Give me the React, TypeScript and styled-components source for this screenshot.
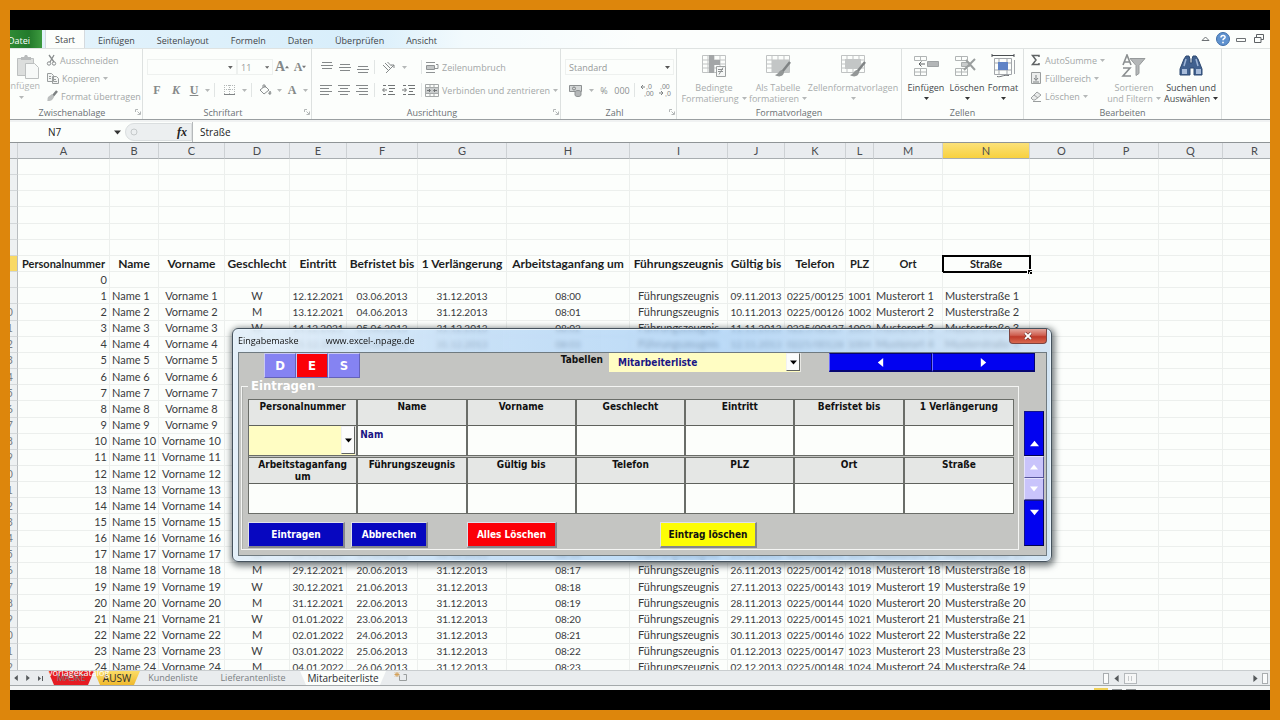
import React from "react";
import styled, { createGlobalStyle, css } from "styled-components";

const ui = `"Open Sans", "Noto Sans", sans-serif`;
const cellFont = `Lato, "Open Sans", sans-serif`;
const formFont = `"DejaVu Sans Condensed", "DejaVu Sans", sans-serif`;

const Global = createGlobalStyle`
  * { box-sizing: border-box; }
  body { margin: 0; font-family: ${ui}; font-size: 9px; color: #3c3f42; }
  button, input, select { font: inherit; color: inherit; margin: 0; padding: 0; border: 0; background: none; }
`;

const Stage = styled.div`
  height: 100vh;
  min-height: 640px;
  border: 10px solid #dd860c;
  background: #000;
  padding: 20px 0;
  overflow: hidden;
`;

const Workbook = styled.main`
  position: relative;
  height: 100%;
  display: flex;
  flex-direction: column;
  background: #fcfefc;
  overflow: hidden;
`;

/* ---------- ribbon tabs ---------- */

const TabBar = styled.nav`
  display: flex;
  flex: 0 0 18px;
  align-items: stretch;
  border-bottom: 1px solid #dfe3e2;
  background: linear-gradient(90deg, #e4f3fb 0, #d8eefb 28%, #f2fafd 36%, #fcfefd 50%, #fcfefc 100%);
`;

const RibbonTab = styled.button<{ $active?: boolean }>`
  padding: 2px 11px 0;
  line-height: 15px;
  white-space: nowrap;
  color: #3f4448;
  ${(p) =>
    p.$active &&
    css`
      height: 18px;
      background: #fcfefc;
      border: 1px solid #d5dade;
      border-width: 0 1px;
      padding: 1px 9px 0;
      margin-right: 2px;
    `}
`;

const FileTab = styled.button`
  display: flex;
  justify-content: flex-end;
  align-items: center;
  width: 32px;
  margin-right: 3px;
  padding: 2px 12px 0 0;
  line-height: 15px;
  overflow: hidden;
  color: #fff;
  background: linear-gradient(90deg, #2f8a34, #237a2b 60%, #3d9a3f);
`;

const WindowTools = styled.div`
  display: flex;
  align-items: center;
  gap: 4px;
  margin-left: auto;
  padding-right: 4px;
`;

const ToolButton = styled.button`
  display: flex;
  align-items: center;
  justify-content: center;
  width: 14px;
`;

/* ---------- ribbon ---------- */

const Ribbon = styled.section`
  display: flex;
  flex: 0 0 71px;
  border-bottom: 1px solid #9a9fa1;
  background: #fcfefc;
`;

const Group = styled.div<{ $w: number }>`
  display: flex;
  flex-direction: column;
  flex: 0 0 ${(p) => p.$w}px;
  border-right: 1px solid #dde1e0;
`;

const GroupBody = styled.div`
  display: flex;
  flex: 1;
`;

const GroupFoot = styled.div`
  display: flex;
  justify-content: center;
  align-items: center;
  height: 14px;
  color: #6b7074;
`;

const FootLabel = styled.span`
  flex: 1;
  text-align: center;
`;

const Rows = styled.div<{ $pad?: number }>`
  display: flex;
  flex-direction: column;
  padding: 8px 0 0 ${(p) => p.$pad ?? 8}px;
  gap: 3px;
`;

const Row = styled.div`
  display: flex;
  align-items: center;
  height: 20px;
`;

const SmallList = styled.div<{ $pad: number }>`
  display: flex;
  flex-direction: column;
  padding: 2px 0 0 ${(p) => p.$pad}px;
`;

const SmallButton = styled.button`
  display: flex;
  align-items: center;
  gap: 3px;
  height: 18px;
  white-space: nowrap;
  color: #a3a7a7;
`;

const IconButton = styled.button<{ $w?: number }>`
  display: flex;
  align-items: center;
  justify-content: center;
  flex: 0 0 ${(p) => p.$w ?? 18}px;
  height: 18px;
  color: #8c9091;
`;

const Glyph = styled.span<{ $style?: "b" | "i" | "u"; $big?: boolean }>`
  font-family: "Liberation Serif", serif;
  font-weight: bold;
  font-size: ${(p) => (p.$big ? 14 : 12)}px;
  line-height: 16px;
  font-style: ${(p) => (p.$style === "i" ? "italic" : "normal")};
  text-decoration: ${(p) => (p.$style === "u" ? "underline" : "none")};
  color: #858989;
`;

const Rule = styled.span`
  width: 1px;
  height: 14px;
  margin: 0 3px;
  background: #e1e5e4;
`;

const BoxField = styled.label<{ $w: number }>`
  display: flex;
  align-items: center;
  justify-content: space-between;
  width: ${(p) => p.$w}px;
  height: 16px;
  padding: 0 3px;
  border: 1px solid #eef1ef;
  color: #96999a;
`;

const BoxInput = styled.input`
  width: 100%;
  min-width: 0;
  outline: none;
`;

const BoxSelect = styled.select`
  flex: 1;
  appearance: none;
  outline: none;
`;

const BigButton = styled.button<{ $w: number; $off?: boolean }>`
  display: flex;
  flex-direction: column;
  align-items: center;
  width: ${(p) => p.$w}px;
  padding-top: 5px;
  line-height: 11px;
  color: ${(p) => (p.$off ? "#a8acac" : "#44484b")};
  white-space: nowrap;
  > svg:first-child { margin-bottom: 4px; }
  > svg:last-child { margin-top: 3px; }
`;

const ArrowLabel = styled.span`
  display: flex;
  align-items: center;
  gap: 3px;
`;

const PasteButton = styled.button`
  display: flex;
  flex-direction: column;
  align-items: flex-end;
  width: 30px;
  padding-top: 5px;
  line-height: 11px;
  overflow: hidden;
  color: #b0b3b3;
`;

const PasteArrow = styled.span`
  padding-right: 16px;
`;

/* ---------- formula bar ---------- */

const FormulaBar = styled.div`
  display: flex;
  flex: 0 0 23px;
  border-top: 2px solid #f0f2f2;
  border-bottom: 1px solid #8f9496;
  font-size: 10px;
  color: #222;
`;

const NameBox = styled.label`
  display: flex;
  align-items: center;
  width: 113px;
  padding-right: 2px;
`;

const NameInput = styled.input`
  width: 88px;
  flex: 1;
  text-align: center;
  padding-right: 15px;
`;

const FxPill = styled.div`
  display: flex;
  align-items: center;
  justify-content: space-between;
  width: 67px;
  margin: 1px 0 1px 2px;
  padding: 0 4px 0 4px;
  border-radius: 9px 0 0 9px;
  border: 1px solid #dadedf;
  background: #eceff0;
`;

const FxButton = styled.button`
  font-family: "Liberation Serif", serif;
  font-style: italic;
  font-weight: bold;
  font-size: 12px;
  line-height: 14px;
`;

const FormulaInput = styled.input`
  flex: 1;
  padding-left: 7px;
  border-left: 1px solid #b5b9bb;
  outline: none;
`;

/* ---------- sheet ---------- */

const SheetArea = styled.section`
  flex: 1;
  min-height: 0;
  overflow: hidden;
`;

const Grid = styled.table`
  table-layout: fixed;
  width: max(100%, 1277px);
  height: 533px;
  border-collapse: separate;
  border-spacing: 0;
  font-family: ${cellFont};
  font-size: 11px;
  line-height: 14px;
  color: #3a3b3c;
`;

const ColHead = styled.th<{ $on?: boolean }>`
  height: 16px;
  padding: 0;
  font-weight: normal;
  text-align: center;
  color: #4a4d50;
  border-right: 1px solid #cdd1d4;
  border-bottom: 1px solid #a8adb0;
  background: ${(p) => (p.$on ? "linear-gradient(#fbe179, #f8d13f)" : "#e9ecef")};
`;

const RowHead = styled.th<{ $on?: boolean }>`
  padding: 0;
  font-weight: normal;
  color: #7b7f82;
  border-right: 1px solid #b9bdc0;
  border-bottom: 1px solid #d3d7d9;
  background: ${(p) => (p.$on ? "#f9d965" : "#eef1f2")};
`;

const RowNumber = styled.div`
  display: flex;
  justify-content: flex-end;
  padding-right: 4px;
  height: 14px;
  overflow: hidden;
`;

const Cell = styled.td<{ $align?: string; $num?: boolean; $active?: boolean }>`
  position: relative;
  height: 16px;
  padding: 0 2px;
  text-align: ${(p) => p.$align ?? "center"};
  white-space: nowrap;
  font-size: ${(p) => (p.$num ? 10 : 11)}px;
  border-right: 1px solid #ecefed;
  border-bottom: 1px solid #ecefed;
  ${(p) =>
    p.$active &&
    css`
      outline: 2px solid #000;
      outline-offset: -1px;
    `}
`;

const HeadCell = styled(Cell)<{ $strong?: boolean }>`
  padding: 0;
  font-weight: 700;
  color: #1d1e1f;
  font-size: ${(p) => (p.$strong ? 12 : 11)}px;
`;

const FillHandle = styled.span`
  position: absolute;
  right: -3px;
  bottom: -3px;
  width: 5px;
  height: 5px;
  background: #000;
  border: 1px solid #fff;
  border-width: 1px 0 0 1px;
`;

/* ---------- sheet tabs ---------- */

const SheetBar = styled.div`
  position: relative;
  display: flex;
  align-items: stretch;
  flex: 0 0 14px;
  border-top: 1px solid #c9cdcf;
  border-bottom: 1px solid #a4a9ab;
  background: #e9ecee;
  line-height: 12px;
`;

const SheetNav = styled.div`
  display: flex;
  align-items: center;
  justify-content: space-between;
  width: 34px;
  padding-left: 3px;
  margin-right: 4px;
`;

const SheetTab = styled.button<{ $bg?: string; $w: number; $active?: boolean }>`
  width: ${(p) => p.$w}px;
  white-space: nowrap;
  font-size: ${(p) => (p.$active ? 10 : 9)}px;
  color: ${(p) => (p.$active ? "#2b2d2f" : "#7a7f83")};
  background: ${(p) => p.$bg ?? "transparent"};
  clip-path: polygon(0 0, 100% 0, calc(100% - 6px) 100%, 6px 100%);
`;

const Watermark = styled.span`
  position: absolute;
  left: 38px;
  top: -4px;
  color: #fff;
`;

const HScroll = styled.div`
  display: flex;
  align-items: center;
  margin-left: auto;
  width: 167px;
  padding-right: 2px;
`;

const Splitter = styled.span`
  width: 6px;
  height: 11px;
  border: 1px solid #a9adb0;
  background: #fafbfb;
`;

const Thumb = styled.span`
  width: 13px;
  height: 11px;
  margin: 0 auto 0 1px;
  border: 1px solid #b5b9bc;
  background: repeating-linear-gradient(90deg, #c6c9cb 0 1px, #f6f7f7 1px 3px) center / 5px 5px no-repeat #f6f7f7;
`;

const StatusBar = styled.footer`
  display: flex;
  flex: 0 0 4px;
  align-items: flex-end;
  justify-content: flex-end;
  gap: 4px;
  padding-right: 134px;
  background: #f3f5f5;
`;

const ViewMark = styled.span<{ $on?: boolean }>`
  width: ${(p) => (p.$on ? 14 : 10)}px;
  height: ${(p) => (p.$on ? 2 : 1)}px;
  background: ${(p) => (p.$on ? "#efcf55" : "#8b8f91")};
`;

/* ---------- entry form window ---------- */

const Dialog = styled.section`
  position: absolute;
  left: 222px;
  top: 298px;
  width: 820px;
  height: 234px;
  display: flex;
  flex-direction: column;
  padding: 0 4px 5px 5px;
  border: 1px solid #46535e;
  border-radius: 6px;
  background: linear-gradient(90deg, rgba(224, 237, 248, 0.85), rgba(180, 213, 245, 0.72) 30%, rgba(160, 203, 245, 0.7) 60%, rgba(198, 221, 242, 0.75));
  backdrop-filter: blur(2px);
  box-shadow: inset 0 0 0 1px #e9f4fc, 1px 2px 6px 2px rgba(30, 40, 45, 0.6);
  font-family: ${formFont};
  font-size: 10px;
  font-weight: bold;
  color: #111;
`;

const TitleBar = styled.header`
  display: flex;
  flex: 0 0 23px;
  align-items: flex-start;
  gap: 27px;
  font-family: ${ui};
  font-weight: normal;
  font-size: 9px;
  line-height: 23px;
`;

const CloseButton = styled.button`
  display: flex;
  align-items: center;
  justify-content: center;
  width: 38px;
  height: 15px;
  margin-left: auto;
  border: 1px solid #7d4440;
  border-top: 0;
  border-radius: 0 0 4px 4px;
  background: linear-gradient(#e3a59b, #cf5f50 45%, #bf3a2a 55%, #d9694f);
`;

const Client = styled.div`
  flex: 1;
  display: flex;
  flex-direction: column;
  border: 1px solid #6f7a80;
  background: #c4c5c2;
`;

const TopRow = styled.div`
  display: flex;
  align-items: flex-start;
  height: 25px;
`;

const ModeButtons = styled.div`
  display: flex;
  margin-left: 25px;
`;

const ModeButton = styled.button<{ $on?: boolean }>`
  width: 32px;
  height: 25px;
  font-weight: bold;
  font-size: 13px;
  color: #fff;
  background: ${(p) => (p.$on ? "#fb0007" : "#8583f2")};
  border: 1px solid #c9c9f4;
  border-right-color: #6462b8;
  border-bottom-color: #6462b8;
`;

const TableLabel = styled.label`
  margin-left: auto;
  margin-right: 6px;
  line-height: 14px;
`;

const Combo = styled.span<{ $w?: number }>`
  display: flex;
  align-items: stretch;
  width: ${(p) => (p.$w ? `${p.$w}px` : "auto")};
  height: 19px;
  padding-bottom: 1px;
  border-right: 1px solid #e8e8e4;
  background: #fffdc3;
`;

const FormSelect = styled.select`
  flex: 1;
  min-width: 0;
  appearance: none;
  outline: none;
  font-weight: bold;
  color: #1a1585;
  padding-left: 9px;
`;

const Drop = styled.span`
  display: flex;
  align-items: center;
  justify-content: center;
  width: 14px;
  background: #fcfdfc;
  border: 1px solid #f2f2f2;
  border-right-color: #60635f;
  border-bottom-color: #60635f;
`;

const Pager = styled.div`
  display: flex;
  margin: 0 11px 0 28px;
`;

const PageButton = styled.button`
  display: flex;
  align-items: center;
  justify-content: center;
  width: 103px;
  height: 19px;
  background: #0202f0;
  border: 1px solid #050570;
  border-left-color: #6d6dff;
  border-bottom-width: 2px;
`;

const Main = styled.div`
  flex: 1;
  display: flex;
  align-items: flex-start;
`;

const FieldBox = styled.fieldset`
  width: 778px;
  height: 172px;
  margin: 0 0 0 2px;
  min-width: 0;
  padding: 0 4px 0 6px;
  border: 1px solid #f4f5f3;
  box-shadow: inset 1px 0 0 #aeb0ad;
`;

const Legend = styled.legend`
  padding: 0 3px;
  font-size: 13px;
  line-height: 16px;
  color: #fff;
`;

const FieldGrid = styled.div`
  display: grid;
  grid-template-columns: repeat(7, 1fr);
  row-gap: 1px;
  margin-top: 5px;
  border-left: 1px solid #6a6d68;
`;

const Field = styled.div`
  display: flex;
  flex-direction: column;
  border: 1px solid #6a6d68;
  border-width: 1px 2px 1px 0;
  &:nth-child(7n) { border-right-width: 1px; }
`;

const FieldLabel = styled.label`
  height: 26px;
  padding: 1px 4px 0;
  line-height: 12px;
  text-align: center;
  background: #e5e7e5;
  border-bottom: 1px solid #5f625d;
`;

const FieldInput = styled.input`
  width: 100%;
  height: 29px;
  padding: 0 2px 12px;
  outline: none;
  font-weight: bold;
  color: #1a1585;
  background: #fcfefb;
`;

const NumberCombo = styled(Combo)`
  height: 29px;
`;

const Actions = styled.div`
  display: flex;
  margin-top: 8px;
`;

const ActionButton = styled.button<{ $w: number; $bg: string; $fg?: string; $gap?: number }>`
  width: ${(p) => p.$w}px;
  height: 26px;
  margin-right: ${(p) => p.$gap ?? 0}px;
  font-weight: bold;
  color: ${(p) => p.$fg ?? "#fff"};
  background: ${(p) => p.$bg};
  border: 2px solid #dfe0ea;
  border-right-color: #85868c;
  border-bottom-color: #85868c;
  border-width: 1px 2px 2px 1px;
`;

const SideBar = styled.div`
  display: flex;
  flex-direction: column;
  width: 20px;
  margin: 33px 0 0 5px;
`;

const SideButton = styled.button<{ $h: number; $pale?: boolean; $end?: boolean }>`
  display: flex;
  justify-content: center;
  align-items: ${(p) => (p.$pale ? "center" : p.$end ? "flex-end" : "flex-start")};
  height: ${(p) => p.$h}px;
  padding: 7px 0;
  background: ${(p) => (p.$pale ? "#c9c4fb" : "#0202f0")};
  border: 1px solid ${(p) => (p.$pale ? "#e5e3fd" : "#12128c")};
  border-right-color: ${(p) => (p.$pale ? "#55549a" : "#03034e")};
  border-bottom-color: ${(p) => (p.$pale ? "#55549a" : "#03034e")};
`;

/* ---------- drawings ---------- */

type Dir = "up" | "down" | "left" | "right";
const triangles: Record<Dir, string> = {
  up: "0,8 5,2 10,8",
  down: "0,2 5,8 10,2",
  left: "8,0 2,5 8,10",
  right: "2,0 8,5 2,10",
};
const Tri = ({ dir = "down", size = 6, color = "#333" }: { dir?: Dir; size?: number; color?: string }) => (
  <svg width={size} height={size} viewBox="0 0 10 10" aria-hidden="true">
    <polygon points={triangles[dir]} fill={color} />
  </svg>
);

const Svg = ({ w, h = w, children }: { w: number; h?: number; children: React.ReactNode }) => (
  <svg width={w} height={h} viewBox={`0 0 ${w} ${h}`} fill="none" stroke="#9a9e9e" aria-hidden="true">
    {children}
  </svg>
);

const Launcher = () => (
  <Svg w={8}>
    <path d="M1.5 4V1.5H4M3.500 3.500L6 6M6.500 3.500v3h-3" stroke="#b3b7b7" />
  </Svg>
);

const Lines = ({ rows }: { rows: [number, number, number][] }) => (
  <Svg w={13} h={13}>
    {rows.map(([x1, x2, y]) => (
      <path key={y} d={`M${x1} ${y + 0.5}H${x2}`} stroke="#85898a" />
    ))}
  </Svg>
);

const Indent = ({ flip }: { flip?: boolean }) => (
  <Svg w={13} h={12}>
    <path d="M1 1.500h3M6 1.500h7M7 4.500h6M7 7.500h4M1 10.500h3M6 10.500h7" stroke="#707475" />
    <path d={flip ? "M0 6h4M2.500 4L4.500 6L2.500 8" : "M1 6h4M2.500 4L.5 6L2.500 8"} stroke="#707475" />
  </Svg>
);

const TableIcon = ({ kind }: { kind: "cond" | "table" | "style" }) => (
  <Svg w={26} h={24}>
    <path d="M1.500 1.500h23v17h-23zM1.500 6h23M1.500 10h23M1.500 14h23M7 1.500v17M13 1.500v17M19 1.500v17" stroke="#c0c3c3" />
    {kind === "cond" && (
      <>
        <path d="M8 1h5v18H8zM13 6h6v5h-6z" fill="#a3a6a7" stroke="none" />
        <path d="M15.500 12.500h9v10h-9z" fill="#f6f8f7" stroke="#9da1a1" />
        <path d="M17 15.500h5M17 17.500h5M18 20.500l4-7" stroke="#8d9191" />
      </>
    )}
    {kind !== "cond" && (
      <>
        <path d={kind === "table" ? "M7 6h17v12H7z" : "M5 5h16v10H5z"} fill="#c3c6c6" stroke="none" />
        <path d="M25 8L17 18" stroke="#7f8384" strokeWidth="2.500" />
        <path d="M17 16c-3 0-3 4-7 5c4 3 9 1 9-3z" fill="#939797" stroke="none" />
      </>
    )}
  </Svg>
);

const CellsIcon = ({ kind }: { kind: "add" | "del" }) => (
  <Svg w={26} h={24}>
    <path d="M1.500 2.500h12v4h-12zM7.500 2.500v4M1.500 14.500h12v7h-12zM1.500 18h12M7.500 14.500v7" stroke="#b1b5b5" />
    {kind === "add" ? (
      <>
        <path d="M14.500 7.500h11v5h-11z" fill="#b3b6b7" stroke="#9fa3a4" />
        <path d="M12 10H6M8.500 7.500L6 10l2.500 2.500" stroke="#5d6162" />
      </>
    ) : (
      <>
        <path d="M7.500 8.500h8v4h-8z" fill="#c9cccc" stroke="#a9adad" />
        <path d="M12 6l9 10M21 5L10 16" stroke="#9a9e9e" strokeWidth="2" />
      </>
    )}
  </Svg>
);

const FormatIcon = () => (
  <Svg w={26} h={24}>
    <path d="M2 1.500h22M2 0v3M24 0v3" stroke="#4b4f52" />
    <path d="M4.500 4.500h17v16h-17zM4.500 9h17M4.500 16h17M9 4.500v16M17 4.500v16M24.500 6v14" stroke="#a3a7ab" />
    <path d="M8 8h10v8H8z" fill="#5f83c6" stroke="none" />
    <path d="M7 22.500c4 1 6-2 12-1" stroke="#6b6f73" />
  </Svg>
);

const SortIcon = () => (
  <Svg w={26} h={24}>
    <path d="M2 11L6 1l4 10M3.500 8h5M2 14h7L2 22h8" stroke="#8b8f90" strokeWidth="1.600" />
    <path d="M9 4.500h15l-6 7v8l-3 2v-10z" fill="#b4b7b8" stroke="#969a9b" />
  </Svg>
);

const Binoculars = () => (
  <Svg w={26} h={24}>
    <path d="M6 5l2-3h3l1 3v4h2V5l1-3h3l2 3l4 10v6h-8v-7h-4v7H2v-6z" fill="#41618f" stroke="#2f4a72" />
    <path d="M4 15h5v5H4zM18 15h5v5h-5z" fill="#a9bddb" stroke="none" />
    <path d="M8 5l-2 7M18 5l2 7" stroke="#9db4d6" strokeWidth="1.500" />
  </Svg>
);

const PasteIcon = () => (
  <Svg w={24} h={26}>
    <path d="M1.500 4.500h16v17h-16z" fill="#dcdedd" stroke="#bdc0c0" />
    <path d="M5 6V3h3l1-2h2l1 2h3v3z" fill="#b9bcbc" stroke="none" />
    <path d="M9.500 9.500h9l4 4v11h-13z" fill="#f7f9f8" stroke="#bdc0c0" />
  </Svg>
);

const Scissors = () => (
  <Svg w={11} h={12}>
    <path d="M3 1l5 7M8 1L4 8" stroke="#898d8e" strokeWidth="1.300" />
    <circle cx="3" cy="9.500" r="1.700" stroke="#898d8e" />
    <circle cx="8" cy="9.500" r="1.700" stroke="#898d8e" />
  </Svg>
);

const Copy = () => (
  <Svg w={13} h={12}>
    <path d="M1.500 1.500h4l2 2v6h-6zM6.500 4.500h4l2 2v5h-6zM3 4.500h2M3 6.500h2M8 7.500h2M8 9.500h3" fill="#f4f6f5" />
  </Svg>
);

const Brush = () => (
  <Svg w={12} h={12}>
    <path d="M11 1L6 7" stroke="#7d8182" strokeWidth="2.500" />
    <path d="M6 4L2 7c-1 2 0 4-1 4c3 0 6 0 7-5z" fill="#bcbfbf" stroke="none" />
  </Svg>
);

const WrapIcon = () => (
  <Svg w={14} h={13}>
    <path d="M1 1.500h9M1.500 4.500h8v4h-8zM1 11.500h9M11 3.500h2v4h-3" stroke="#8f9394" />
    <path d="M2 5h7v3H2z" fill="#c3c6c6" stroke="none" />
  </Svg>
);

const MergeIcon = () => (
  <Svg w={14} h={13}>
    <path d="M.5.5h13v12H.5zM.5 3.500h13M.5 9.500h13M5 .5v3M9 .5v3M5 9.500v3M9 9.500v3" stroke="#a5a9a9" />
    <path d="M1 4h12v5H1z" fill="#c9cccc" stroke="none" />
    <path d="M2 6.500h3M9 6.500h3M4 5l1.500 1.500L4 8M10 5L8.500 6.500L10 8" stroke="#707475" />
  </Svg>
);

const Orientation = () => (
  <Svg w={14} h={13}>
    <path d="M1 4l5 5M3 2l5 5M5.500 1l4 4M4 12l8-8M12 4h-3M12 4v3" stroke="#85898a" />
  </Svg>
);

const BordersIcon = () => (
  <Svg w={13} h={12}>
    <path d="M1.500 1v9M6.500 1v9M11.500 1v9M1 1.500h11M1 5.500h11" stroke="#b3b7b7" strokeDasharray="1 1" />
    <path d="M1 10.500h11" stroke="#808485" />
  </Svg>
);

const FillIcon = () => (
  <Svg w={14} h={13}>
    <path d="M2 6l5-4l4 4l-5 4zM5 4V1h2v3" stroke="#8b8f90" />
    <path d="M12 7c2 3 0 4-1 3c-1-1 1-2 1-3z" fill="#8b8f90" />
  </Svg>
);

const Currency = () => (
  <Svg w={14} h={13}>
    <path d="M.5 1.500h12v6H.5z" fill="#d4d7d7" stroke="#8d9192" />
    <circle cx="5" cy="4.500" r="1.500" stroke="#7f8384" />
    <path d="M6 8c0-2 6-2 6 0v3c0 2-6 2-6 0z" fill="#b4b7b8" stroke="#8d9192" />
  </Svg>
);

const Decimals = ({ more }: { more?: boolean }) => (
  <svg width="15" height="14" viewBox="0 0 15 14" fontFamily="Liberation Sans" fontSize="7" fill="#7f8384" aria-hidden="true">
    <text x={more ? 6 : 2} y="6">{more ? ",0" : ",00"}</text>
    <text x={more ? 4 : 7} y="13">{more ? ",00" : ",0"}</text>
    <path d={more ? "M1 4h4M1 4l2-2M1 4l2 2" : "M1 10h4M5 10l-2-2M5 10l-2 2"} stroke="#7f8384" fill="none" />
  </svg>
);

const FillDown = () => (
  <Svg w={12} h={12}>
    <path d="M1.500.5h9v11h-9z" fill="#eceeed" />
    <path d="M6 3v5M4 6l2 2.500L8 6M3 10h6" stroke="#7d8182" />
  </Svg>
);

const Eraser = () => (
  <Svg w={12} h={12}>
    <path d="M1 8l6-6l4 3l-6 5H3zM4 5l4 3" fill="#e9ebea" stroke="#9da1a1" />
    <path d="M3 11.500h8" />
  </Svg>
);

const Help = () => (
  <svg width="14" height="14" viewBox="0 0 14 14" aria-hidden="true">
    <circle cx="7" cy="7" r="6.500" fill="#5f92cf" stroke="#3f6ea8" />
    <path d="M5 5.500c0-3 4.500-2.500 4 0c-.3 1.200-2 1.300-2 2.700M7 9.700v1.500" fill="none" stroke="#fff" strokeWidth="1.600" />
  </svg>
);

/* ---------- data ---------- */

const columns: [string, number][] = [
  ["A", 92], ["B", 49], ["C", 66], ["D", 65], ["E", 57], ["F", 71], ["G", 89], ["H", 123], ["I", 98],
  ["J", 57], ["K", 61], ["L", 28], ["M", 69], ["N", 87], ["O", 64], ["P", 65], ["Q", 64], ["R", 64],
];

const headings = [
  "Personalnummer", "Name", "Vorname", "Geschlecht", "Eintritt", "Befristet bis", "1 Verlängerung",
  "Arbeitstaganfang um", "Führungszeugnis", "Gültig bis", "Telefon", "PLZ", "Ort", "Straße",
];

const two = (n: number) => String(n).padStart(2, "0");
const day = (y: number, m: number, d: number) => {
  const t = new Date(Date.UTC(y, m - 1, d));
  return `${two(t.getUTCDate())}.${two(t.getUTCMonth() + 1)}.${t.getUTCFullYear()}`;
};

const record = (n: number) => [
  `${n}`, `Name ${n}`, `Vorname ${n}`, n % 2 ? "W" : "M", day(2021, 12, 11 + n), day(2013, 6, 2 + n),
  "31.12.2013", `08:${two(n - 1)}`, "Führungszeugnis", day(2013, 11, 8 + n), `0225/00${124 + n}`,
  `${1000 + n}`, `Musterort ${n}`, `Musterstraße ${n}`,
];

const alignOf = (i: number) => (i === 0 || i === 11 ? "right" : i === 1 || i > 11 ? "left" : "center");
const numeric = new Set([4, 5, 6, 7, 9, 10, 11]);

const ribbonTabs = ["Einfügen", "Seitenlayout", "Formeln", "Daten", "Überprüfen", "Ansicht"];

/* ---------- parts ---------- */

const GroupPanel = ({ name, w, launcher, children }: { name: string; w: number; launcher?: boolean; children: React.ReactNode }) => (
  <Group $w={w}>
    <GroupBody>{children}</GroupBody>
    <GroupFoot>
      <FootLabel>{name}</FootLabel>
      {launcher && <Launcher />}
    </GroupFoot>
  </Group>
);

const faint = "#b5b8b8";

const RibbonBar = () => (
  <Ribbon>
    <GroupPanel name="Zwischenablage" w={133} launcher>
      <PasteButton>
        <PasteIcon />
        <span>Einfügen</span>
        <PasteArrow><Tri color={faint} size={5} /></PasteArrow>
      </PasteButton>
      <SmallList $pad={6}>
        <SmallButton><Scissors />Ausschneiden</SmallButton>
        <SmallButton><Copy />Kopieren<Tri color={faint} size={5} /></SmallButton>
        <SmallButton><Brush />Format übertragen</SmallButton>
      </SmallList>
    </GroupPanel>
    <GroupPanel name="Schriftart" w={169} launcher>
      <Rows $pad={4}>
        <Row>
          <BoxField $w={90}><BoxInput aria-label="Schriftart" /><Tri size={5} color="#666" /></BoxField>
          <BoxField $w={36}><BoxInput aria-label="Schriftgrad" defaultValue="11" /><Tri size={5} color="#666" /></BoxField>
          <IconButton $w={18} aria-label="Schrift vergrößern"><Glyph $big>A</Glyph><Tri dir="up" size={4} color="#777" /></IconButton>
          <IconButton $w={18} aria-label="Schrift verkleinern"><Glyph>A</Glyph><Tri size={4} color="#777" /></IconButton>
        </Row>
        <Row>
          <IconButton $w={20}><Glyph $style="b">F</Glyph></IconButton>
          <IconButton><Glyph $style="i">K</Glyph></IconButton>
          <IconButton><Glyph $style="u">U</Glyph></IconButton>
          <IconButton $w={8} aria-label="Unterstreichungsart"><Tri size={5} color={faint} /></IconButton>
          <Rule />
          <IconButton $w={22} aria-label="Rahmen"><BordersIcon /></IconButton>
          <IconButton $w={8} aria-label="Rahmenart"><Tri size={5} color={faint} /></IconButton>
          <Rule />
          <IconButton $w={20} aria-label="Füllfarbe"><FillIcon /></IconButton>
          <IconButton $w={8} aria-label="Füllfarben"><Tri size={5} color={faint} /></IconButton>
          <IconButton $w={18} aria-label="Schriftfarbe"><Glyph>A</Glyph></IconButton>
          <IconButton $w={8} aria-label="Schriftfarben"><Tri size={5} color={faint} /></IconButton>
        </Row>
      </Rows>
    </GroupPanel>
    <GroupPanel name="Ausrichtung" w={249} launcher>
      <Rows $pad={5}>
        <Row>
          <IconButton aria-label="Oben"><Lines rows={[[2, 12, 1], [1, 13, 4], [2, 12, 7]]} /></IconButton>
          <IconButton aria-label="Mitte"><Lines rows={[[2, 12, 3], [1, 13, 6], [2, 12, 9]]} /></IconButton>
          <IconButton aria-label="Unten"><Lines rows={[[2, 12, 5], [1, 13, 8], [2, 12, 11]]} /></IconButton>
          <Rule />
          <IconButton $w={22} aria-label="Orientierung"><Orientation /></IconButton>
          <IconButton $w={8} aria-label="Orientierungsart"><Tri size={5} color={faint} /></IconButton>
          <IconButton as="span" $w={10} />
          <Rule />
          <SmallButton><WrapIcon />Zeilenumbruch</SmallButton>
        </Row>
        <Row>
          <IconButton aria-label="Linksbündig"><Lines rows={[[0, 12, 1], [0, 9, 4], [0, 12, 7], [0, 9, 10]]} /></IconButton>
          <IconButton aria-label="Zentriert"><Lines rows={[[0, 12, 1], [2, 10, 4], [0, 12, 7], [2, 10, 10]]} /></IconButton>
          <IconButton aria-label="Rechtsbündig"><Lines rows={[[0, 12, 1], [3, 12, 4], [0, 12, 7], [3, 12, 10]]} /></IconButton>
          <Rule />
          <IconButton $w={20} aria-label="Einzug verkleinern"><Indent /></IconButton>
          <IconButton $w={20} aria-label="Einzug vergrößern"><Indent flip /></IconButton>
          <Rule />
          <SmallButton><MergeIcon />Verbinden und zentrieren<Tri size={5} color={faint} /></SmallButton>
        </Row>
      </Rows>
    </GroupPanel>
    <GroupPanel name="Zahl" w={116} launcher>
      <Rows $pad={4}>
        <Row>
          <BoxField $w={109}>
            <BoxSelect aria-label="Zahlenformat"><option>Standard</option></BoxSelect>
            <Tri size={5} color="#555" />
          </BoxField>
        </Row>
        <Row>
          <IconButton $w={22} aria-label="Währung"><Currency /></IconButton>
          <IconButton $w={8} aria-label="Währungen"><Tri size={5} color={faint} /></IconButton>
          <IconButton $w={18}>%</IconButton>
          <IconButton $w={18}>000</IconButton>
          <Rule />
          <IconButton aria-label="Dezimalstelle hinzufügen"><Decimals more /></IconButton>
          <IconButton aria-label="Dezimalstelle löschen"><Decimals /></IconButton>
        </Row>
      </Rows>
    </GroupPanel>
    <GroupPanel name="Formatvorlagen" w={225}>
      <BigButton $w={74} $off><TableIcon kind="cond" /><span>Bedingte</span><ArrowLabel>Formatierung<Tri size={5} color={faint} /></ArrowLabel></BigButton>
      <BigButton $w={54} $off><TableIcon kind="table" /><span>Als Tabelle</span><ArrowLabel>formatieren<Tri size={5} color={faint} /></ArrowLabel></BigButton>
      <BigButton $w={96} $off><TableIcon kind="style" /><span>Zellenformatvorlagen</span><Tri size={5} color={faint} /></BigButton>
    </GroupPanel>
    <GroupPanel name="Zellen" w={122}>
      <BigButton $w={48}><CellsIcon kind="add" /><span>Einfügen</span><Tri size={5} /></BigButton>
      <BigButton $w={34}><CellsIcon kind="del" /><span>Löschen</span><Tri size={5} /></BigButton>
      <BigButton $w={38}><FormatIcon /><span>Format</span><Tri size={5} /></BigButton>
    </GroupPanel>
    <GroupPanel name="Bearbeiten" w={198}>
      <SmallList $pad={6}>
        <SmallButton>
          <Svg w={12}><path d="M9 3V1.500H2.500L6 6L2.500 10.500H9V9" stroke="#5f6364" strokeWidth="1.500" /></Svg>
          AutoSumme<Tri size={5} color={faint} />
        </SmallButton>
        <SmallButton><FillDown />Füllbereich<Tri size={5} color={faint} /></SmallButton>
        <SmallButton><Eraser />Löschen<Tri size={5} color={faint} /></SmallButton>
      </SmallList>
      <BigButton $w={58} $off><SortIcon /><span>Sortieren</span><ArrowLabel>und Filtern<Tri size={5} color={faint} /></ArrowLabel></BigButton>
      <BigButton $w={56}><Binoculars /><span>Suchen und</span><ArrowLabel>Auswählen<Tri size={5} /></ArrowLabel></BigButton>
    </GroupPanel>
  </Ribbon>
);

const Sheet = () => (
  <SheetArea>
    <Grid>
      <colgroup>
        <col style={{ width: 8 }} />
        {columns.map(([c, w]) => (
          <col key={c} style={c === "R" ? undefined : { width: w }} />
        ))}
      </colgroup>
      <thead>
        <tr>
          <ColHead />
          {columns.map(([c]) => (
            <ColHead key={c} $on={c === "N"}>{c}</ColHead>
          ))}
        </tr>
      </thead>
      <tbody>
        {Array.from({ length: 32 }, (_, r) => {
          const n = r - 7;
          const values = n === 0 ? ["0"] : n > 0 ? record(n) : [];
          return (
            <tr key={r}>
              <RowHead $on={r === 6}>{r > 8 && <RowNumber>{r + 1}</RowNumber>}</RowHead>
              {columns.map(([c], i) =>
                r === 6 ? (
                  <HeadCell key={c} $strong={i > 0 && i < 11} $active={c === "N"}>
                    {headings[i]}
                    {c === "N" && <FillHandle />}
                  </HeadCell>
                ) : (
                  <Cell key={c} $align={alignOf(i)} $num={numeric.has(i)}>{values[i]}</Cell>
                ),
              )}
            </tr>
          );
        })}
      </tbody>
    </Grid>
  </SheetArea>
);

const EntryForm = () => (
  <Dialog role="dialog" aria-label="Eingabemaske">
    <TitleBar>
      <span>Eingabemaske</span>
      <span>www.excel-.npage.de</span>
      <CloseButton aria-label="Schließen">
        <svg width="8" height="8" viewBox="0 0 8 8" aria-hidden="true">
          <path d="M1 1l6 6M7 1L1 7" stroke="#5d2a26" strokeWidth="3" />
          <path d="M1 1l6 6M7 1L1 7" stroke="#fff" strokeWidth="1.800" />
        </svg>
      </CloseButton>
    </TitleBar>
    <Client>
      <TopRow>
        <ModeButtons>
          <ModeButton>D</ModeButton>
          <ModeButton $on>E</ModeButton>
          <ModeButton>S</ModeButton>
        </ModeButtons>
        <TableLabel htmlFor="tables">Tabellen</TableLabel>
        <Combo $w={192}>
          <FormSelect id="tables"><option>Mitarbeiterliste</option></FormSelect>
          <Drop><Tri size={7} color="#000" /></Drop>
        </Combo>
        <Pager>
          <PageButton aria-label="Zurück"><Tri dir="left" size={9} color="#fff" /></PageButton>
          <PageButton aria-label="Weiter"><Tri dir="right" size={9} color="#fff" /></PageButton>
        </Pager>
      </TopRow>
      <Main>
        <FieldBox>
          <Legend>Eintragen</Legend>
          <FieldGrid>
            {headings.map((h, i) => (
              <Field key={h}>
                <FieldLabel htmlFor={`f${i}`}>{h}</FieldLabel>
                {i === 0 ? (
                  <NumberCombo>
                    <FormSelect id="f0"><option></option></FormSelect>
                    <Drop><Tri size={7} color="#000" /></Drop>
                  </NumberCombo>
                ) : (
                  <FieldInput id={`f${i}`} defaultValue={i === 1 ? "Nam" : ""} />
                )}
              </Field>
            ))}
          </FieldGrid>
          <Actions>
            <ActionButton $w={97} $bg="#0707c0" $gap={6}>Eintragen</ActionButton>
            <ActionButton $w={77} $bg="#0707c0" $gap={39}>Abbrechen</ActionButton>
            <ActionButton $w={90} $bg="#fb0007" $gap={103}>Alles Löschen</ActionButton>
            <ActionButton $w={97} $bg="#fdfd05" $fg="#111">Eintrag löschen</ActionButton>
          </Actions>
        </FieldBox>
        <SideBar>
          <SideButton $h={45} $end aria-label="Erster"><Tri dir="up" size={9} color="#fff" /></SideButton>
          <SideButton $h={22} $pale aria-label="Vorheriger"><Tri dir="up" size={8} color="#fff" /></SideButton>
          <SideButton $h={22} $pale aria-label="Nächster"><Tri size={8} color="#fff" /></SideButton>
          <SideButton $h={46} aria-label="Letzter"><Tri size={9} color="#fff" /></SideButton>
        </SideBar>
      </Main>
    </Client>
  </Dialog>
);

export default function App() {
  return (
    <Stage>
      <Global />
      <Workbook>
        <TabBar>
          <FileTab>Datei</FileTab>
          <RibbonTab $active>Start</RibbonTab>
          {ribbonTabs.map((t) => (
            <RibbonTab key={t}>{t}</RibbonTab>
          ))}
          <WindowTools>
            <ToolButton aria-label="Menüband minimieren">
              <Svg w={9}><path d="M1 5.500L4.500 2L8 5.500zM1 7.500" stroke="#6d7174" /></Svg>
            </ToolButton>
            <ToolButton aria-label="Hilfe"><Help /></ToolButton>
            <ToolButton aria-label="Fenster minimieren">
              <Svg w={10}><path d="M.5 4.500h9v3h-9z" stroke="#6d7174" /></Svg>
            </ToolButton>
            <ToolButton aria-label="Fenster wiederherstellen">
              <Svg w={10}><path d="M2.500 3V.5h7v5H7M.5 3.500h6.500v5H.5z" stroke="#5d6164" /></Svg>
            </ToolButton>
          </WindowTools>
        </TabBar>
        <RibbonBar />
        <FormulaBar>
          <NameBox>
            <NameInput aria-label="Namenfeld" defaultValue="N7" />
            <Tri size={7} />
          </NameBox>
          <FxPill>
            <Svg w={8}><circle cx="4" cy="4" r="3" stroke="#c5c9ca" /></Svg>
            <FxButton>fx</FxButton>
          </FxPill>
          <FormulaInput aria-label="Bearbeitungsleiste" defaultValue="Straße" />
        </FormulaBar>
        <Sheet />
        <SheetBar>
          <SheetNav>
            <Tri dir="left" size={6} color="#55595b" />
            <Tri dir="right" size={6} color="#55595b" />
            <Svg w={7}><path d="M1 1l3 2.500L1 6z" fill="#55595b" stroke="none" /><path d="M5.500 1v5" stroke="#55595b" /></Svg>
          </SheetNav>
          <SheetTab $w={46} $bg="#e51c23">MASKE</SheetTab>
          <SheetTab $w={46} $bg="linear-gradient(#fbdc66, #f0b92d)" $active>AUSW</SheetTab>
          <SheetTab $w={66}>Kundenliste</SheetTab>
          <SheetTab $w={94}>Lieferantenliste</SheetTab>
          <SheetTab $w={86} $bg="#fcfefc" $active>Mitarbeiterliste</SheetTab>
          <SheetTab $w={30} aria-label="Tabelle einfügen">
            <Svg w={14} h={11}><path d="M5.500 4.500v5h7v-6h-3" /><path d="M3 1v5M.5 3.500h5M1 1.500l4 4M5 1.500l-4 4" stroke="#d3a15b" /></Svg>
          </SheetTab>
          <Watermark>vorlagekatalog</Watermark>
          <HScroll>
            <Splitter />
            <ToolButton aria-label="Nach links"><Tri dir="left" size={7} color="#55595b" /></ToolButton>
            <Thumb />
            <ToolButton aria-label="Nach rechts"><Tri dir="right" size={7} color="#55595b" /></ToolButton>
            <Splitter />
          </HScroll>
        </SheetBar>
        <StatusBar>
          <ViewMark $on />
          <ViewMark />
          <ViewMark />
        </StatusBar>
        <EntryForm />
      </Workbook>
    </Stage>
  );
}
